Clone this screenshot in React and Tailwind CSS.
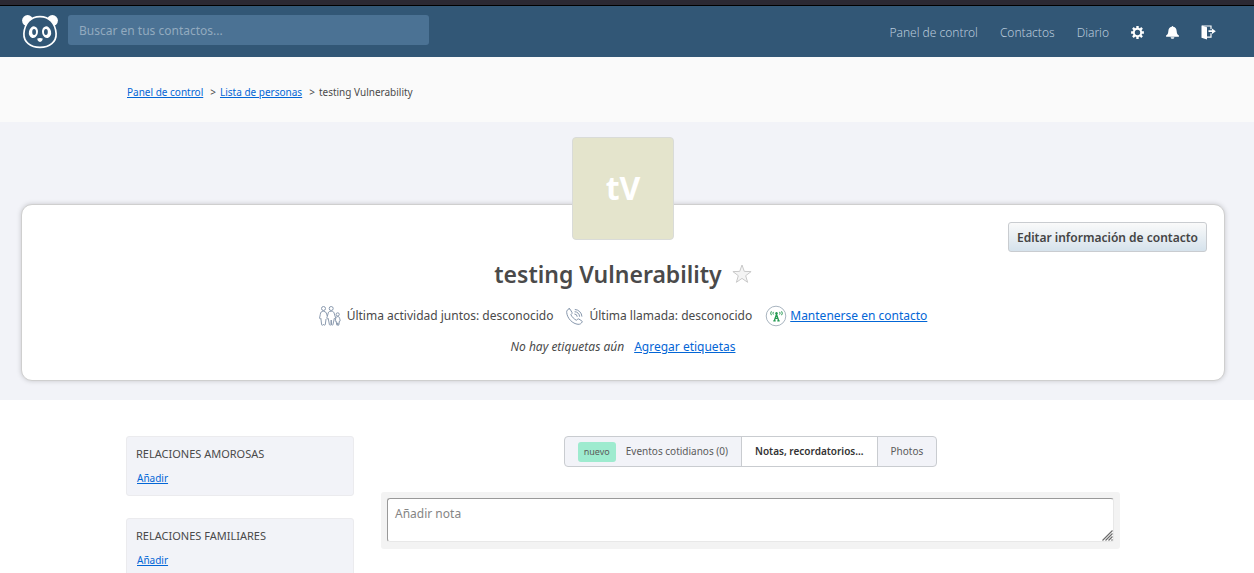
import React from "react";

function PandaLogo() {
  return (
    <svg viewBox="0 0 36 34" className="block h-[34px] w-9" aria-hidden="true">
      <circle cx="5.6" cy="5.6" r="5.5" fill="#fff" />
      <circle cx="30.4" cy="5.6" r="5.5" fill="#fff" />
      <path
        d="M18 1.700C27.500 1.700 33.300 8.300 34.100 18.500C34.500 27 27.500 32.400 18 32.400C8.500 32.400 1.500 27 1.900 18.500C2.700 8.300 8.500 1.700 18 1.700Z"
        fill="#325776"
        stroke="#fff"
        strokeWidth="1.700"
      />
      <ellipse cx="11.400" cy="17.200" rx="4.500" ry="5.900" fill="#fff" transform="rotate(12 11.400 17.200)" />
      <ellipse cx="24.600" cy="17.200" rx="4.500" ry="5.900" fill="#fff" transform="rotate(-12 24.600 17.200)" />
      <ellipse cx="12.100" cy="17" rx="1.900" ry="3" fill="#325776" />
      <ellipse cx="23.900" cy="17" rx="1.900" ry="3" fill="#325776" />
      <path d="M15.300 23.600Q18 22.600 20.700 23.600Q20.700 26.600 18 27Q15.300 26.600 15.300 23.600Z" fill="#fff" />
    </svg>
  );
}

function GearIcon() {
  return (
    <svg viewBox="0 0 14 14" className="block size-[13px]" fill="none" stroke="#fff" aria-hidden="true">
      <circle cx="7" cy="7" r="4" strokeWidth="2.200" />
      <path
        strokeWidth="2.600"
        d="M7 .1V3M7 11v2.900M.1 7H3M11 7h2.900M2.100 2.100l2 2M9.900 9.900l2 2M2.100 11.900l2-2M9.900 4.100l2-2"
      />
    </svg>
  );
}

function BellIcon() {
  return (
    <svg viewBox="0 0 14 14" className="block size-[13px]" fill="#fff" aria-hidden="true">
      <path d="M6.200.9a.8.8 0 0 1 1.600 0C10.400 1.400 11.300 3.300 11.500 5.600C11.700 8 12.300 9.200 13.900 10.300V11.600H.1V10.300C1.700 9.200 2.300 8 2.500 5.600C2.700 3.300 3.600 1.400 6.200.9Z" />
      <path d="M5 12.100h4c-.2 1.100-.9 1.700-2 1.700S5.200 13.200 5 12.100Z" />
    </svg>
  );
}

function ExitIcon() {
  return (
    <svg viewBox="0 0 15 15" className="block size-[15px]" aria-hidden="true">
      <path d="M.5.500L6 2.200V14.500L.5 12.800Z" fill="#fff" />
      <path d="M1 1H10V4.300M10 8.200V12.200H6" fill="none" stroke="#fff" strokeWidth="1.200" />
      <path d="M7.500 5.300H11V3.400L14.800 6.200L11 9.100V7.100H7.500Z" fill="#fff" />
    </svg>
  );
}

function PeopleIcon() {
  return (
    <svg viewBox="0 0 22 20" className="block h-5 w-[22px]" fill="none" stroke="#7f90a6" strokeWidth=".9" strokeLinejoin="round" aria-hidden="true">
      <circle cx="4.500" cy="2.500" r="2" />
      <path d="M4.500 5.200C2.200 5.200 1.600 6.400 1.300 8.300L.6 12c0 1 1 1.200 1.300.4L2.600 18.600c.1 1 1.300.8 1.500 0h.8c.2.800 1.300.8 1.400 0L7 13" />
      <circle cx="12.200" cy="2.500" r="2" />
      <path d="M12.200 5.200C9.800 5.200 9.200 6.300 9 8L7.800 12c-.1.900.9 1.200 1.400.3L10.400 18.500c.2 1 1.500.9 1.600 0L12.200 14l.3 4.500c.1.900 1.300 1 1.500 0L15.300 12.300c.5.700 1.400.3 1.300-.5L15.400 8C15 6.300 14.500 5.200 12.200 5.200Z" />
      <path d="M4.500 5.200Q7.300 5.500 7.700 8L8.200 10" />
      <circle cx="18.700" cy="8.400" r="1.600" />
      <path d="M18.700 10.600c-1.400 0-1.800.8-2 2l-.4 2.200c0 .6.600.8.900.3l.5 3.700c.1.700.9.600 1 0l.1-2 .1 2c.1.600.9.700 1 0l.5-3.700c.4.400.9.100.8-.4l-.5-2.100c-.2-1.200-.6-2-2-2Z" />
    </svg>
  );
}

function CallIcon() {
  return (
    <svg viewBox="0 0 17 17" className="block size-[17px]" fill="none" stroke="#7f90a6" strokeWidth=".95" strokeLinecap="round" strokeLinejoin="round" aria-hidden="true">
      <path d="M3.200.8C1.400 1.300.5 2.700.7 4.500C1.300 10.500 6.500 15.700 12 16.300C13.900 16.500 15.400 15.500 16.200 13.900C16.300 13.500 16.100 13.100 15.800 12.900L12.800 11C12.300 10.700 11.900 10.800 11.500 11.200L10.500 12.300C8.300 11.300 5.800 8.800 4.900 6.700L5.900 5.600C6.200 5.200 6.200 4.900 6 4.500L4.200 1.300C4 .9 3.700.7 3.200.8Z" />
      <path d="M8.800 6a2.500 2.500 0 0 1 2.400 2.400M9 3.700a4.700 4.700 0 0 1 4.600 4.600M9.200 1.500a7 7 0 0 1 6.700 6.700" />
    </svg>
  );
}

function AntennaIcon() {
  return (
    <svg viewBox="0 0 22 22" className="block size-[22px]" fill="none" aria-hidden="true">
      <circle cx="11" cy="11" r="9.800" fill="#fff" stroke="#a9b5c0" strokeWidth="1" />
      <g stroke="#259a52" strokeWidth="1">
        <path d="M6.400 6.300Q5 8.200 6.400 10.200M8.400 6.900Q7.400 8.200 8.400 9.500M16.600 6.300Q18 8.200 16.600 10.200M14.600 6.900Q15.600 8.200 14.600 9.500" />
        <path d="M11.500 9.300L9.300 15.700M11.500 9.300L13.700 15.700M10 13.400h3M8.300 15.800h2.400M12.300 15.800h2.400" strokeWidth="1.300" />
      </g>
      <circle cx="11.500" cy="8.200" r="1.200" fill="#259a52" />
    </svg>
  );
}

function StarIcon() {
  return (
    <svg viewBox="0 0 20 20" className="block size-5" aria-hidden="true">
      <path d="M10 1L12.300 7.400L19.100 7.600L13.700 11.700L15.600 18.300L10 14.400L4.400 18.300L6.300 11.700L.9 7.600L7.700 7.400Z" fill="#f4f4f4" stroke="#c9c9c9" strokeWidth="1" />
    </svg>
  );
}

function ResizeGrip() {
  return (
    <svg viewBox="0 0 11 11" className="pointer-events-none absolute right-px bottom-px size-[11px]" aria-hidden="true">
      <rect width="11" height="11" fill="#fff" />
      <path d="M.5 10.500L10.500.5M3.500 10.500L10.500 3.500M6.500 10.500L10.500 6.500M9.500 10.500L10.500 9.500" stroke="#6c6c6c" strokeWidth="1.200" />
    </svg>
  );
}

const linkClass = "text-[#0366d6] underline";

function Header() {
  return (
    <header className="border-t border-black bg-[#325776]">
      <div className="flex h-[51px] items-center pr-[38px] pl-[22px]">
        <a href="#inicio" aria-label="Inicio" className="shrink-0">
          <PandaLogo />
        </a>
        <form role="search" className="ml-[10px] w-[361px] pb-[3px]">
          <input
            type="search"
            aria-label="Buscar en tus contactos"
            placeholder="Buscar en tus contactos..."
            className="block h-[30px] w-full rounded-[3px] bg-[#4b7294] px-[11px] text-[12px] text-white outline-none placeholder:text-[#92aabf]"
          />
        </form>
        <nav className="ml-auto flex items-center gap-[22px] pt-[2px] text-[12px] font-light text-[#b9cadb]">
          <a href="#panel">Panel de control</a>
          <a href="#contactos">Contactos</a>
          <a href="#diario">Diario</a>
          <a href="#ajustes" aria-label="Ajustes"><GearIcon /></a>
          <a href="#novedades" aria-label="Novedades"><BellIcon /></a>
          <a href="#salir" aria-label="Salir"><ExitIcon /></a>
        </nav>
      </div>
    </header>
  );
}

function Breadcrumb() {
  return (
    <nav aria-label="Ruta" className="bg-[#fafafa] pr-2">
      <ol className="mx-auto flex h-[65px] max-w-[994px] items-center pt-[6px] pl-px text-[10px]">
        <li><a href="#panel" className={linkClass}>Panel de control</a></li>
        <li className="ml-[7px] before:mr-1 before:content-['>']"><a href="#lista" className={linkClass}>Lista de personas</a></li>
        <li className="ml-[7px] before:mr-1 before:content-['>']">testing Vulnerability</li>
      </ol>
    </nav>
  );
}

function ContactHeader() {
  return (
    <section className="bg-[#f2f3f8] pt-[15px] pr-[29px] pb-[19px] pl-[21px]">
      <div className="relative mt-[67px] rounded-[11px] border border-[#cfcfcf] bg-white pb-[23px] shadow-[0_0_5px_rgba(0,0,0,0.18)]">
        <div className="mx-auto -mt-[68px] flex h-[103px] w-[102px] items-center justify-center rounded-[4px] border border-[#d9dbd8] bg-[#e4e4cc] pb-[2px] text-[32px] font-bold text-white">
          tV
        </div>
        <button type="button" className="absolute top-[17px] right-[17px] h-[30px] rounded-[3px] border border-[#c9ccd0] bg-linear-to-b from-[#fafafa] to-[#d5e2ec] px-2 pt-px text-[12px] font-semibold text-[#444]">
          Editar información de contacto
        </button>
        <div className="mt-[17px] flex items-center justify-center gap-[10px]">
          <h1 className="text-[23px] leading-[34px] font-semibold">testing Vulnerability</h1>
          <button type="button" aria-label="Marcar como favorito"><StarIcon /></button>
        </div>
        <ul className="mt-[14px] flex items-center justify-center gap-[13px] text-[12px] leading-[22px]">
          <li className="flex items-center gap-[6px]"><PeopleIcon />Última actividad juntos: desconocido</li>
          <li className="flex items-center gap-[6px]"><CallIcon />Última llamada: desconocido</li>
          <li className="flex items-center gap-[3px]"><AntennaIcon /><a href="#mantener" className={linkClass}>Mantenerse en contacto</a></li>
        </ul>
        <p className="mt-[10px] flex justify-center gap-[10px] text-[12px] leading-5">
          <em>No hay etiquetas aún</em>
          <a href="#etiquetas" className={linkClass}>Agregar etiquetas</a>
        </p>
      </div>
    </section>
  );
}

function RelationBox({ title }) {
  return (
    <section className="rounded-[3px] border border-[#ebebee] bg-[#f2f3f8] px-[9px] pt-2 pb-2 text-[11px] leading-[18px]">
      <h2 className="uppercase">{title}</h2>
      <a href="#agregar" className={"ml-px mt-[6px] inline-block text-[10px] " + linkClass}>Añadir</a>
    </section>
  );
}

function Tabs() {
  return (
    <div role="tablist" className="mx-auto flex h-[31px] w-fit overflow-hidden rounded-[4px] border border-[#c9ccd0] bg-[#f2f3f8] text-[10px] text-[#5b5b5b]">
      <button type="button" role="tab" aria-selected="false" className="flex items-center gap-[10px] px-[13px]">
        <span className="rounded-[3px] bg-[#9eebcf] px-[6px] text-[9px] leading-5">nuevo</span>
        Eventos cotidianos (0)
      </button>
      <button type="button" role="tab" aria-selected="true" className="border-x border-[#c9ccd0] bg-white px-[13px] font-semibold text-[#333]">Notas, recordatorios...</button>
      <button type="button" role="tab" aria-selected="false" className="px-[13px]">Photos</button>
    </div>
  );
}

export default function App() {
  return (
    <div className="min-h-screen bg-white font-['Noto_Sans',sans-serif] text-[#4a4a4a]">
      <div className="h-[5px] bg-[#2b2933]" />
      <Header />
      <Breadcrumb />
      <ContactHeader />
      <main className="pt-9 pr-2">
        <div className="mx-auto flex max-w-[994px] items-start gap-[27px]">
          <aside className="flex w-[228px] shrink-0 flex-col gap-[22px]">
            <RelationBox title="Relaciones amorosas" />
            <RelationBox title="Relaciones familiares" />
          </aside>
          <div className="min-w-0 flex-1">
            <Tabs />
            <form className="mt-[25px] rounded-[3px] bg-[#f3f3f3] p-[6px] pb-[7px]">
              <div className="relative">
                <textarea
                  aria-label="Añadir nota"
                  placeholder="Añadir nota"
                  className="block h-11 w-full resize-none rounded-[3px] border border-t-[#999] border-r-[#e8e8e8] border-b-[#e8e8e8] border-l-[#999] bg-white px-[7px] py-[5px] text-[12px] leading-5 outline-none placeholder:text-[#858585]"
                />
                <ResizeGrip />
              </div>
            </form>
          </div>
        </div>
      </main>
    </div>
  );
}
